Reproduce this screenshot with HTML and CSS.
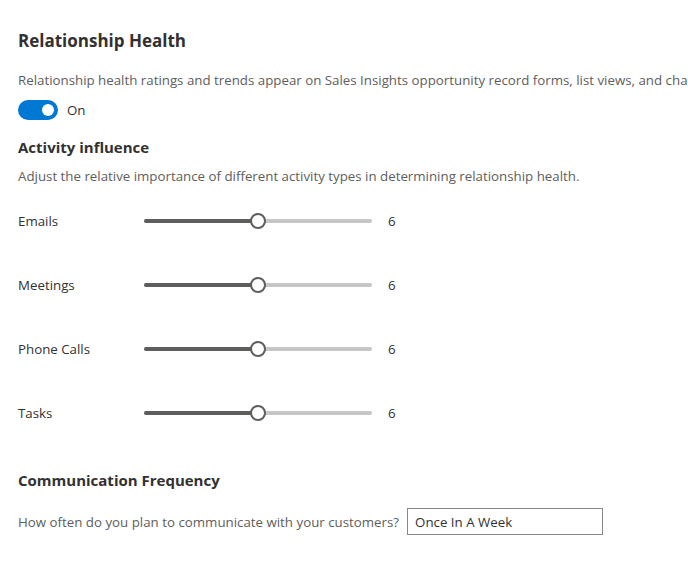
FILE: index.html
```html
<!DOCTYPE html>
<html>
<head>
<meta charset="utf-8">
<link rel="stylesheet" href="styles.css">
</head>
<body>
<main class="page">
  <h1 class="title">Relationship Health</h1>
  <p class="desc nowrap">Relationship health ratings and trends appear on Sales Insights opportunity record forms, list views, and charts.</p>
  <div class="toggle-row">
    <span class="toggle"><span class="knob"></span></span>
    <span class="toggle-label">On</span>
  </div>

  <h2 class="section">Activity influence</h2>
  <p class="desc">Adjust the relative importance of different activity types in determining relationship health.</p>

  <div class="sliders">
    <div class="row">
      <span class="label">Emails</span>
      <span class="slider"><span class="fill" style="width:50%"></span><span class="thumb" style="left:50%"></span></span>
      <span class="value">6</span>
    </div>
    <div class="row">
      <span class="label">Meetings</span>
      <span class="slider"><span class="fill" style="width:50%"></span><span class="thumb" style="left:50%"></span></span>
      <span class="value">6</span>
    </div>
    <div class="row">
      <span class="label">Phone Calls</span>
      <span class="slider"><span class="fill" style="width:50%"></span><span class="thumb" style="left:50%"></span></span>
      <span class="value">6</span>
    </div>
    <div class="row">
      <span class="label">Tasks</span>
      <span class="slider"><span class="fill" style="width:50%"></span><span class="thumb" style="left:50%"></span></span>
      <span class="value">6</span>
    </div>
  </div>

  <h2 class="section comm">Communication Frequency</h2>
  <div class="question">
    <span class="desc-inline">How often do you plan to communicate with your customers?</span>
    <span class="input">Once In A Week</span>
  </div>
</main>
</body>
</html>
```

FILE: styles.css
```css
html, body {
  margin: 0;
  padding: 0;
  background: #ffffff;
  overflow: hidden;
}
body {
  font-family: "Segoe UI", "Open Sans", "Noto Sans", sans-serif;
  color: #323130;
  width: 688px;
  height: 563px;
}
.page {
  padding: 28px 0 0 18px;
}
.title {
  margin: 0;
  font-size: 17px;
  font-weight: 700;
  line-height: 26px;
  color: #323130;
}
.desc {
  margin: 0;
  font-size: 13.3px;
  line-height: 20px;
  color: #605e5c;
}
.nowrap {
  white-space: nowrap;
  overflow: hidden;
  margin-top: 16px;
}
.toggle-row {
  display: flex;
  align-items: center;
  gap: 9px;
  margin-top: 10px;
  height: 20px;
}
.toggle {
  width: 40px;
  height: 20px;
  border-radius: 10px;
  background: #0078d4;
  display: flex;
  align-items: center;
  justify-content: flex-end;
  padding-right: 4px;
  box-sizing: border-box;
}
.knob {
  width: 12px;
  height: 12px;
  border-radius: 50%;
  background: #ffffff;
}
.toggle-label {
  font-size: 13.3px;
  color: #323130;
}
.section {
  margin: 0;
  font-size: 15px;
  font-weight: 700;
  line-height: 22px;
  color: #323130;
}
.toggle-row + .section {
  margin-top: 16px;
}
.section + .desc {
  margin-top: 8px;
}
.sliders {
  margin-top: 25px;
  display: flex;
  flex-direction: column;
  gap: 44px;
}
.row {
  display: flex;
  align-items: center;
  height: 20px;
}
.label {
  width: 126px;
  font-size: 13.3px;
  color: #323130;
}
.slider {
  position: relative;
  width: 228px;
  height: 4px;
  border-radius: 2px;
  background: #c8c6c4;
}
.fill {
  position: absolute;
  left: 0;
  top: 0;
  height: 4px;
  border-radius: 2px;
  background: #605e5c;
}
.thumb {
  position: absolute;
  top: 50%;
  width: 16px;
  height: 16px;
  box-sizing: border-box;
  border: 2px solid #605e5c;
  border-radius: 50%;
  background: #ffffff;
  transform: translate(-50%, -50%);
}
.value {
  margin-left: 16px;
  font-size: 13.3px;
  color: #323130;
}
.comm {
  margin-top: 46px;
}
.question {
  margin-top: 17px;
  display: flex;
  align-items: center;
  gap: 8px;
}
.desc-inline {
  font-size: 13.3px;
  color: #605e5c;
}
.input {
  width: 196px;
  height: 27px;
  box-sizing: border-box;
  border: 1px solid #8a8886;
  padding: 0 7px;
  display: flex;
  align-items: center;
  font-size: 13.3px;
  color: #323130;
}
```
